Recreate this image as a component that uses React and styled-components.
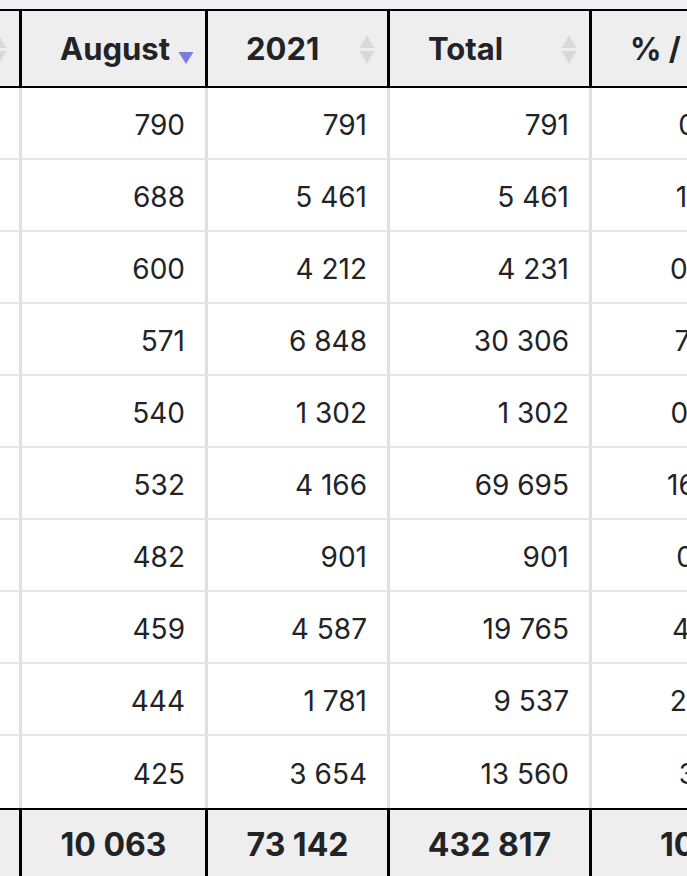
import styled, { createGlobalStyle } from "styled-components"

const GlobalStyle = createGlobalStyle`
    html, body {
        margin: 0;
        padding: 0;
        background-color: #F1F1F3;
        font-family: Inter, "Noto Sans", "Liberation Sans", sans-serif;
        color: #222326;
    }
`

const Viewport = styled.div`
    width: 687px;
    height: 876px;
    overflow: hidden;
    padding-top: 9px;
    box-sizing: border-box;
`

const Table = styled.table`
    table-layout: fixed;
    border-collapse: separate;
    border-spacing: 0;
    width: 916px;
    margin-left: -128px;
    background-color: #FFFFFF;
`

const Head = styled.th`
    height: 79px;
    box-sizing: border-box;
    background-color: #EEEEEF;
    border-top: 2px solid #000;
    border-bottom: 2px solid #000;
    border-right: 3px solid #000;
    padding: 0 12px 0 38px;
    text-align: left;
    font-size: 31px;
    font-weight: 700;
    white-space: nowrap;
    overflow: hidden;
`

const HeadInner = styled.div`
    display: flex;
    align-items: center;
    justify-content: space-between;
    gap: 8px;
`

const Cell = styled.td`
    height: 72px;
    box-sizing: border-box;
    border-right: 3px solid #DEE0E5;
    border-bottom: ${({ $last }) => ($last ? "none" : "2px solid #E4E4E6")};
    padding: 4px 20px 0;
    text-align: right;
    font-size: 28px;
    font-weight: 400;
    white-space: nowrap;
    overflow: hidden;
`

const Foot = styled.td`
    height: 72px;
    box-sizing: border-box;
    background-color: #EEEEEF;
    border-top: 2px solid #000;
    border-right: 3px solid #000;
    text-align: center;
    font-size: 32px;
    font-weight: 700;
    white-space: nowrap;
    overflow: hidden;
    padding-bottom: 2px;
`

function SortIcon({ active }) {
    if (active) {
        return (
            <svg width="16" height="32" viewBox="0 0 16 32" style={{ flexShrink: 0 }}>
                <path d="M0.5 19 L15.5 19 L8 31 Z" fill="#7C7CDF" />
            </svg>
        )
    }
    return (
        <svg width="16" height="32" viewBox="0 0 16 32" style={{ flexShrink: 0 }}>
            <path d="M8 2 L15.5 15 L0.5 15 Z" fill="#D9D9DC" />
            <path d="M0.5 18 L15.5 18 L8 31 Z" fill="#D9D9DC" />
        </svg>
    )
}

const rows = [
    [790, 791, 791],
    [688, 5461, 5461],
    [600, 4212, 4231],
    [571, 6848, 30306],
    [540, 1302, 1302],
    [532, 4166, 69695],
    [482, 901, 901],
    [459, 4587, 19765],
    [444, 1781, 9537],
    [425, 3654, 13560],
]

const grandTotal = 432817

const fmt = (n) => String(n).replace(/\B(?=(\d{3})+(?!\d))/g, "\u00a0")
const pct = (n) => (n / grandTotal * 100).toFixed(2).replace(".", ",") + "\u00a0%"

export default function App() {
    return (
        <>
            <GlobalStyle />
            <Viewport>
                <Table>
                    <colgroup>
                        <col style={{ width: 150 }} />
                        <col style={{ width: 186 }} />
                        <col style={{ width: 182 }} />
                        <col style={{ width: 202 }} />
                        <col style={{ width: 196 }} />
                    </colgroup>
                    <thead>
                        <tr>
                            <Head><HeadInner><span>July</span><SortIcon /></HeadInner></Head>
                            <Head><HeadInner><span>August</span><SortIcon active /></HeadInner></Head>
                            <Head><HeadInner><span>2021</span><SortIcon /></HeadInner></Head>
                            <Head><HeadInner><span>Total</span><SortIcon /></HeadInner></Head>
                            <Head><HeadInner><span>% / Total</span><SortIcon /></HeadInner></Head>
                        </tr>
                    </thead>
                    <tbody>
                        {rows.map((r, i) => (
                            <tr key={i}>
                                <Cell $last={i === rows.length - 1}>{fmt(r[0] - 40)}</Cell>
                                <Cell $last={i === rows.length - 1}>{fmt(r[0])}</Cell>
                                <Cell $last={i === rows.length - 1}>{fmt(r[1])}</Cell>
                                <Cell $last={i === rows.length - 1}>{fmt(r[2])}</Cell>
                                <Cell $last={i === rows.length - 1}>{pct(r[2])}</Cell>
                            </tr>
                        ))}
                    </tbody>
                    <tfoot>
                        <tr>
                            <Foot>9 850</Foot>
                            <Foot>{fmt(10063)}</Foot>
                            <Foot>{fmt(73142)}</Foot>
                            <Foot>{fmt(432817)}</Foot>
                            <Foot>100</Foot>
                        </tr>
                    </tfoot>
                </Table>
            </Viewport>
        </>
    )
}
